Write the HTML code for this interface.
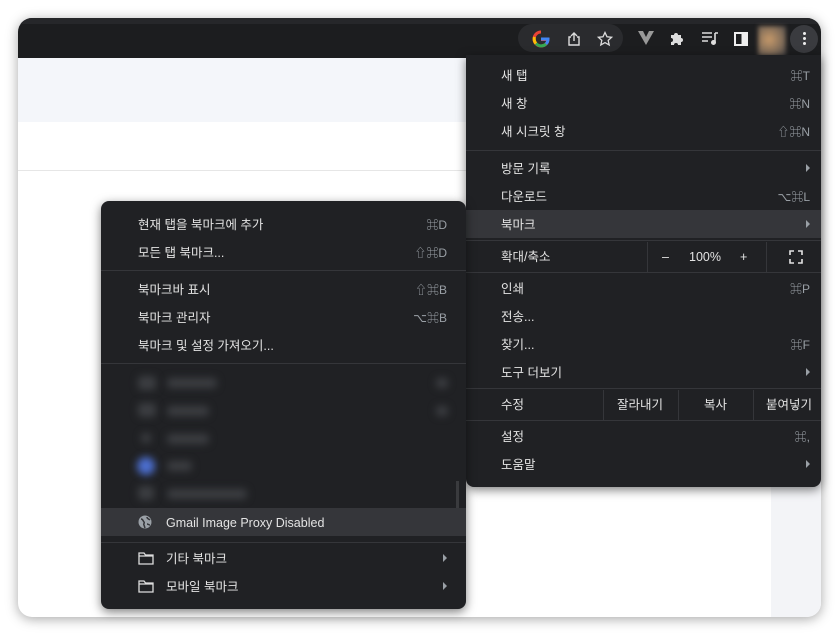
<!DOCTYPE html><html><head><meta charset="utf-8"><style>
*{margin:0;padding:0;box-sizing:border-box}
body{width:839px;height:635px;background:#fff;position:relative;overflow:hidden;font-family:"Liberation Sans","Noto Sans CJK KR",sans-serif;font-size:12.5px;color:#e3e3e3}
.win{position:absolute;left:18px;top:18px;width:803px;height:599px;border-radius:14px;background:#fff;overflow:hidden;box-shadow:0 2px 12px rgba(0,0,0,.35)}
.tb{position:absolute;left:0;top:0;width:100%;height:40px;background:#1c1d1f;border-top:6px solid #26272a}
.ab{position:absolute;left:0;top:40px;width:100%;height:64px;background:#f4f6fa}
.ln{position:absolute;left:0;top:152px;width:100%;height:1px;background:#e6e6e6}
.rs{position:absolute;left:753px;top:152px;width:50px;height:447px;background:#f3f4f7}
.m{position:absolute;background:#202124;border-radius:8px;box-shadow:0 3px 10px rgba(0,0,0,.5)}
.r{position:absolute;left:0;right:0;height:28px;line-height:30px}
.r .t{position:absolute}
.r .k{position:absolute;color:#9aa0a6;font-size:12px}
.sep{position:absolute;left:0;right:0;height:1px;background:#35363a}
.hl{background:#35363a}
.arr{position:absolute;width:0;height:0;border-left:4px solid #9aa0a6;border-top:4px solid transparent;border-bottom:4px solid transparent}
.blur{position:absolute;filter:blur(4px);background:#3c3e42;border-radius:4px}
.vs{position:absolute;top:0;bottom:0;width:1px;background:#35363a}
</style></head><body>
<div class="win">
<div class="tb"></div>
<div class="ab"></div><div class="ln"></div><div class="rs"></div>
<div style="position:absolute;left:500px;top:6px;width:105px;height:28px;background:#2a2b2e;border-radius:14px"></div>
</div>
<svg style="position:absolute;left:532px;top:30px" width="18" height="18" viewBox="0 0 18 18"><path d="M9 2a7 7 0 1 0 7 7.5H9" fill="none" stroke="#ea4335" stroke-width="3"/><path d="M2.5 7A7 7 0 0 0 4 13.5" stroke="#fbbc05" stroke-width="3" fill="none"/><path d="M4 13.5A7 7 0 0 0 14 14" stroke="#34a853" stroke-width="3" fill="none"/><path d="M14 14A7 7 0 0 0 16 9H9" stroke="#4285f4" stroke-width="3" fill="none"/></svg>
<svg style="position:absolute;left:566px;top:31px" width="16" height="16" viewBox="0 0 16 16" fill="none" stroke="#ddd" stroke-width="1.4"><path d="M5 6H3v8h10V6h-2M8 10V2M5 5l3-3 3 3"/></svg>
<svg style="position:absolute;left:597px;top:31px" width="16" height="16" viewBox="0 0 16 16" fill="none" stroke="#ddd" stroke-width="1.3"><path d="M8 1.5l2 4.3 4.6.5-3.4 3.1 1 4.6L8 11.6 3.8 14l1-4.6L1.4 6.3 6 5.8z"/></svg>
<svg style="position:absolute;left:638px;top:31px" width="16" height="14" viewBox="0 0 16 14"><path d="M0 0h5l3 6 3-6h5L8 14z" fill="#999"/></svg>
<svg style="position:absolute;left:669px;top:30px" width="16" height="16" viewBox="0 0 16 16" fill="#ddd"><path d="M2 5h3a2 2 0 1 1 4 0h3v3a2 2 0 1 1 0 4v3H9a2 2 0 1 0-4 0H2v-3a2 2 0 1 0 0-4z"/></svg>
<svg style="position:absolute;left:701px;top:31px" width="18" height="14" viewBox="0 0 18 14" fill="none" stroke="#ddd" stroke-width="1.6"><path d="M1 2h10M1 6h10M1 10h6M14 2v9.5M14 2h3"/><circle cx="12.5" cy="11.5" r="1.7" fill="#ddd"/></svg>
<div style="position:absolute;left:734px;top:32px;width:14px;height:14px;border:2px solid #eee;background:linear-gradient(90deg,#1c1d1f 55%,#eee 55%)"></div>
<div style="position:absolute;left:758px;top:26px;width:28px;height:30px;background:radial-gradient(circle at 40% 45%,#c79a6a,#7d6a58 60%,#3a3b40);filter:blur(2px)"></div>
<div style="position:absolute;left:790px;top:25px;width:28px;height:28px;border-radius:14px;background:#3a3b3f"></div>
<div style="position:absolute;left:803px;top:32px;width:3px;height:3px;background:#eee;border-radius:2px;box-shadow:0 5px 0 #eee,0 10px 0 #eee"></div>

<div class="m" style="left:466px;top:55px;width:355px;height:432px;border-radius:0 0 8px 8px">
<div class="r" style="top:6px"><span class="t" style="left:35px">새 탭</span><span class="k" style="right:11px">⌘T</span></div>
<div class="r" style="top:34px"><span class="t" style="left:35px">새 창</span><span class="k" style="right:11px">⌘N</span></div>
<div class="r" style="top:62px"><span class="t" style="left:35px">새 시크릿 창</span><span class="k" style="right:11px">⇧⌘N</span></div>
<div class="sep" style="top:95px"></div>
<div class="r" style="top:99px"><span class="t" style="left:35px">방문 기록</span><i class="arr" style="right:11px;top:10px"></i></div>
<div class="r" style="top:127px"><span class="t" style="left:35px">다운로드</span><span class="k" style="right:11px">⌥⌘L</span></div>
<div class="r hl" style="top:155px"><span class="t" style="left:35px">북마크</span><i class="arr" style="right:11px;top:10px"></i></div>
<div class="sep" style="top:185px"></div>
<div class="r" style="top:187px;height:30px;line-height:30px"><span class="t" style="left:35px">확대/축소</span><div class="vs" style="left:181px"></div><span class="t" style="left:196px">–</span><span class="t" style="left:223px">100%</span><span class="t" style="left:274px">+</span><div class="vs" style="left:300px"></div>
<svg style="position:absolute;left:323px;top:8px" width="14" height="14" viewBox="0 0 14 14" fill="none" stroke="#e3e3e3" stroke-width="1.6"><path d="M1 5V1h4M9 1h4v4M13 9v4H9M5 13H1V9"/></svg></div>
<div class="sep" style="top:217px"></div>
<div class="r" style="top:219px"><span class="t" style="left:35px">인쇄</span><span class="k" style="right:11px">⌘P</span></div>
<div class="r" style="top:247px"><span class="t" style="left:35px">전송...</span></div>
<div class="r" style="top:275px"><span class="t" style="left:35px">찾기...</span><span class="k" style="right:11px">⌘F</span></div>
<div class="r" style="top:303px"><span class="t" style="left:35px">도구 더보기</span><i class="arr" style="right:11px;top:10px"></i></div>
<div class="sep" style="top:333px"></div>
<div class="r" style="top:335px;height:30px;line-height:30px"><span class="t" style="left:35px">수정</span><div class="vs" style="left:137px"></div><span class="t" style="left:151px">잘라내기</span><div class="vs" style="left:212px"></div><span class="t" style="left:238px">복사</span><div class="vs" style="left:287px"></div><span class="t" style="left:300px">붙여넣기</span></div>
<div class="sep" style="top:365px"></div>
<div class="r" style="top:367px"><span class="t" style="left:35px">설정</span><span class="k" style="right:11px">⌘,</span></div>
<div class="r" style="top:395px"><span class="t" style="left:35px">도움말</span><i class="arr" style="right:11px;top:10px"></i></div>
</div>

<div class="m" style="left:101px;top:201px;width:365px;height:408px">
<div class="r" style="top:9px"><span class="t" style="left:37px">현재 탭을 북마크에 추가</span><span class="k" style="right:19px">⌘D</span></div>
<div class="r" style="top:37px"><span class="t" style="left:37px">모든 탭 북마크...</span><span class="k" style="right:19px">⇧⌘D</span></div>
<div class="sep" style="top:69px"></div>
<div class="r" style="top:74px"><span class="t" style="left:37px">북마크바 표시</span><span class="k" style="right:19px">⇧⌘B</span></div>
<div class="r" style="top:102px"><span class="t" style="left:37px">북마크 관리자</span><span class="k" style="right:19px">⌥⌘B</span></div>
<div class="r" style="top:130px"><span class="t" style="left:37px">북마크 및 설정 가져오기...</span></div>
<div class="sep" style="top:162px"></div>
<div class="blur" style="left:37px;top:175px;width:18px;height:14px"></div><div class="blur" style="left:66px;top:177px;width:50px;height:10px"></div>
<div class="blur" style="left:37px;top:202px;width:18px;height:14px"></div><div class="blur" style="left:66px;top:205px;width:42px;height:10px"></div>
<div class="blur" style="left:40px;top:232px;width:10px;height:10px"></div><div class="blur" style="left:66px;top:233px;width:42px;height:10px"></div>
<div class="blur" style="left:36px;top:256px;width:18px;height:18px;background:#4c6fd0;border-radius:9px"></div><div class="blur" style="left:66px;top:260px;width:25px;height:10px"></div>
<div class="blur" style="left:37px;top:285px;width:16px;height:14px"></div><div class="blur" style="left:66px;top:288px;width:80px;height:10px"></div>
<div class="blur" style="left:335px;top:177px;width:12px;height:10px"></div><div class="blur" style="left:335px;top:205px;width:12px;height:10px"></div>
<div style="position:absolute;left:355px;top:280px;width:3px;height:28px;background:#3a3b3e"></div>
<div class="r hl" style="top:307px"><svg style="position:absolute;left:37px;top:7px" width="14" height="14" viewBox="0 0 14 14"><circle cx="7" cy="7" r="6.5" fill="#9aa0a6"/><path d="M3 4c2 0 2 2 3 3s-1 2 0 3l1 3M9 2c0 2 2 2 3 3M9 9c1 0 2 1 3 1" stroke="#35363a" stroke-width="1.5" fill="none"/></svg><span class="t" style="left:65px">Gmail Image Proxy Disabled</span></div>
<div class="sep" style="top:341px"></div>
<div class="r" style="top:343px"><svg style="position:absolute;left:37px;top:8px" width="16" height="13" viewBox="0 0 16 13" fill="none" stroke="#ddd" stroke-width="1.3"><path d="M1 1h5l1.5 2H15v9H1zM1 4h14"/></svg><span class="t" style="left:65px">기타 북마크</span><i class="arr" style="right:19px;top:10px"></i></div>
<div class="r" style="top:371px"><svg style="position:absolute;left:37px;top:8px" width="16" height="13" viewBox="0 0 16 13" fill="none" stroke="#ddd" stroke-width="1.3"><path d="M1 1h5l1.5 2H15v9H1zM1 4h14"/></svg><span class="t" style="left:65px">모바일 북마크</span><i class="arr" style="right:19px;top:10px"></i></div>
</div>
</body></html>
